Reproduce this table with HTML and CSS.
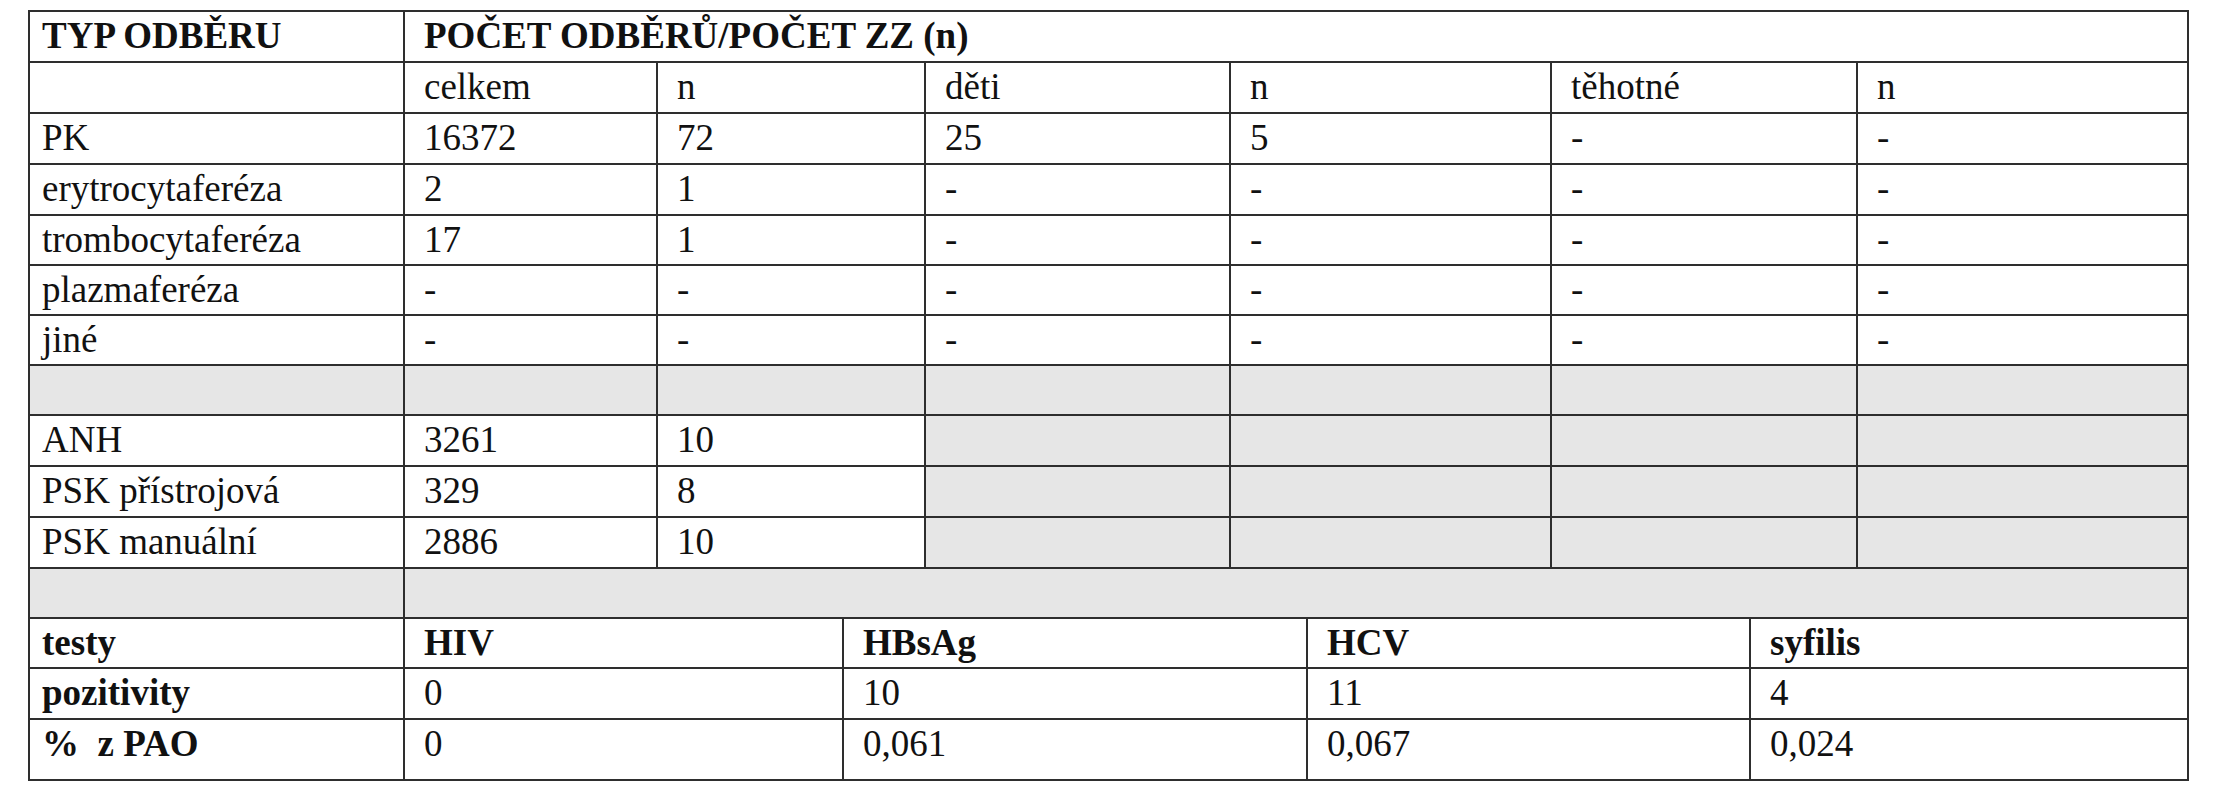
FILE: index.html
```html
<!DOCTYPE html>
<html lang="cs">
<head>
<meta charset="utf-8">
<title>Typ odběru</title>
<link rel="stylesheet" href="styles.css">
</head>
<body>
<table class="data">
  <colgroup>
    <col class="c1"><col class="c2"><col class="c3"><col class="c4"><col class="c5">
    <col class="c6"><col class="c7"><col class="c8"><col class="c9"><col class="c10">
  </colgroup>
  <tr>
    <th class="first">TYP ODBĚRU</th>
    <th colspan="9">POČET ODBĚRŮ/POČET ZZ (n)</th>
  </tr>
  <tr>
    <td class="first"></td><td>celkem</td><td colspan="2">n</td><td>děti</td><td colspan="2">n</td><td colspan="2">těhotné</td><td>n</td>
  </tr>
  <tr>
    <td class="first">PK</td><td>16372</td><td colspan="2">72</td><td>25</td><td colspan="2">5</td><td colspan="2">-</td><td>-</td>
  </tr>
  <tr>
    <td class="first">erytrocytaferéza</td><td>2</td><td colspan="2">1</td><td>-</td><td colspan="2">-</td><td colspan="2">-</td><td>-</td>
  </tr>
  <tr class="r50">
    <td class="first">trombocytaferéza</td><td>17</td><td colspan="2">1</td><td>-</td><td colspan="2">-</td><td colspan="2">-</td><td>-</td>
  </tr>
  <tr class="r50">
    <td class="first">plazmaferéza</td><td>-</td><td colspan="2">-</td><td>-</td><td colspan="2">-</td><td colspan="2">-</td><td>-</td>
  </tr>
  <tr class="r50">
    <td class="first">jiné</td><td>-</td><td colspan="2">-</td><td>-</td><td colspan="2">-</td><td colspan="2">-</td><td>-</td>
  </tr>
  <tr class="r50 shaded">
    <td class="first"></td><td></td><td colspan="2"></td><td></td><td colspan="2"></td><td colspan="2"></td><td></td>
  </tr>
  <tr>
    <td class="first">ANH</td><td>3261</td><td colspan="2">10</td><td class="gray"></td><td colspan="2" class="gray"></td><td colspan="2" class="gray"></td><td class="gray"></td>
  </tr>
  <tr>
    <td class="first">PSK přístrojová</td><td>329</td><td colspan="2">8</td><td class="gray"></td><td colspan="2" class="gray"></td><td colspan="2" class="gray"></td><td class="gray"></td>
  </tr>
  <tr>
    <td class="first">PSK manuální</td><td>2886</td><td colspan="2">10</td><td class="gray"></td><td colspan="2" class="gray"></td><td colspan="2" class="gray"></td><td class="gray"></td>
  </tr>
  <tr class="r50 shaded">
    <td class="first"></td><td colspan="9"></td>
  </tr>
  <tr class="r50 bold">
    <td class="first">testy</td><td colspan="2">HIV</td><td colspan="3">HBsAg</td><td colspan="2">HCV</td><td colspan="2">syfilis</td>
  </tr>
  <tr>
    <td class="first bold">pozitivity</td><td colspan="2">0</td><td colspan="3">10</td><td colspan="2">11</td><td colspan="2">4</td>
  </tr>
  <tr class="r61">
    <td class="first bold">%&nbsp; z PAO</td><td colspan="2">0</td><td colspan="3">0,061</td><td colspan="2">0,067</td><td colspan="2">0,024</td>
  </tr>
</table>
</body>
</html>
```
FILE: styles.css
```css
html, body {
  margin: 0;
  padding: 0;
  background: #ffffff;
}

body {
  padding: 10px 0 0 28px;
  font-family: "Liberation Serif", Tinos, "Times New Roman", Times, "Nimbus Roman", "Nimbus Roman No9 L", "FreeSerif", "Noto Serif", "DejaVu Serif", serif;
  color: #111111;
}

.data {
  border-collapse: collapse;
  table-layout: fixed;
  width: 2161px;
  font-family: inherit;
  font-size: 37px;
  line-height: 1.15;
}

.c1 { width: 375px; }
.c2 { width: 253px; }
.c3 { width: 186px; }
.c4 { width: 82px; }
.c5 { width: 305px; }
.c6 { width: 77px; }
.c7 { width: 244px; }
.c8 { width: 199px; }
.c9 { width: 107px; }
.c10 { width: 331px; }

.data tr {
  height: 51px;
}

.data tr.r50 {
  height: 50px;
}

.data tr.r61 {
  height: 61px;
}

.data th,
.data td {
  border: 2px solid #2e2e2e;
  padding: 3px 8px 0 19px;
  text-align: left;
  vertical-align: top;
  white-space: nowrap;
  overflow: hidden;
  font-family: inherit;
  font-weight: normal;
}

.data th {
  font-weight: bold;
}

.data .first {
  padding-left: 12px;
}

.bold td,
.data td.bold {
  font-weight: bold;
}

.shaded td,
.data td.gray {
  background: #e6e6e6;
}
```
